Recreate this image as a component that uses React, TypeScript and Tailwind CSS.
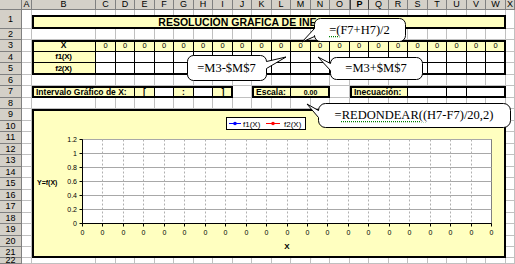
import React from 'react';

const LETTERS = ['A', 'B', 'C', 'D', 'E', 'F', 'G', 'H', 'I', 'J', 'K', 'L', 'M', 'N', 'O', 'P', 'Q', 'R', 'S', 'T', 'U', 'V', 'W', 'X'];
const ROWS = Array.from({ length: 22 }, (_, i) => i + 1);
// grid columns of C..W (row header = 1, A = 2, B = 3)
const DATA_COLS = Array.from({ length: 21 }, (_, i) => i + 4);

const yellow = 'bg-[#ffffc0]';
const hdr = 'bg-[#d4d0c8] border-r border-b border-[#808080] flex items-center justify-center text-[9px] leading-none text-black';

const calloutPath = (x: number, y: number, w: number, h: number, r: number, side: 'left' | 'right', y1: number, y2: number, tx: number, ty: number) => {
  const R = x + w;
  const B = y + h;
  let d = `M${x + r},${y} L${R - r},${y} A${r},${r} 0 0 1 ${R},${y + r} `;
  if (side === 'right') d += `L${R},${y1} L${tx},${ty} L${R},${y2} `;
  d += `L${R},${B - r} A${r},${r} 0 0 1 ${R - r},${B} L${x + r},${B} A${r},${r} 0 0 1 ${x},${B - r} `;
  if (side === 'left') d += `L${x},${y2} L${tx},${ty} L${x},${y1} `;
  d += `L${x},${y + r} A${r},${r} 0 0 1 ${x + r},${y} Z`;
  return d;
};

const Chart: React.FC = () => {
  const xs = Array.from({ length: 21 }, (_, i) => Math.round(82 + i * 20.45) + 0.5);
  const levels: [string, number][] = [['1.2', 139.5], ['1', 153.5], ['0.8', 167.5], ['0.6', 181.5], ['0.4', 195.5], ['0.2', 209.5], ['0', 223.5]];
  const left = xs[0];
  const right = xs[xs.length - 1];

  return (
    <div className={`col-[3/25] row-[10/23] ${yellow} border-2 border-black overflow-hidden`}>
      <svg width={470} height={145} viewBox="34 111 470 145" className="block">
        {/* legend */}
        <rect x={226.5} y={117.5} width={79} height={12} fill="#fff" stroke="#000" />
        <line x1={229} x2={241} y1={123.5} y2={123.5} stroke="#0000ff" />
        <circle cx={235} cy={123.5} r={1.8} fill="#0000ff" />
        <text x={243} y={126.5} fontSize={8}>f1(X)</text>
        <line x1={266} x2={280} y1={123.5} y2={123.5} stroke="#ff0000" />
        <circle cx={273} cy={123.5} r={1.8} fill="#ff0000" />
        <text x={284} y={126.5} fontSize={8}>f2(X)</text>

        {/* plot area */}
        <rect x={left} y={139.5} width={right - left} height={84} fill="#fff" stroke="#808080" />
        {levels.slice(0, -1).map(([, y]) => (
          <line key={y} x1={left} x2={right} y1={y} y2={y} stroke="#a8a8a8" />
        ))}
        {xs.slice(1, -1).map(x => (
          <line key={x} x1={x} x2={x} y1={139.5} y2={223.5} stroke="#b0b0b0" strokeDasharray="2 2" />
        ))}

        {/* axes */}
        <line x1={left} x2={left} y1={139.5} y2={223.5} stroke="#000" />
        <line x1={left} x2={right} y1={223.5} y2={223.5} stroke="#000" />
        {levels.map(([label, y]) => (
          <g key={label}>
            <line x1={left - 3} x2={left} y1={y} y2={y} stroke="#000" />
            <text x={77} y={y + 2.5} fontSize={7} textAnchor="end">{label}</text>
          </g>
        ))}
        {xs.map(x => (
          <g key={x}>
            <line x1={x} x2={x} y1={223.5} y2={226.5} stroke="#000" />
            <text x={x} y={235} fontSize={7} textAnchor="middle">0</text>
          </g>
        ))}
        <text x={287} y={249} fontSize={8} fontWeight="bold" textAnchor="middle">X</text>
        <text x={37} y={184.5} fontSize={7} fontWeight="bold">Y=f(X)</text>
      </svg>
    </div>
  );
};

export default function App() {
  return (
    <div className="relative w-[515px] h-[264px] overflow-hidden bg-white font-['Liberation_Sans',Arial,sans-serif] text-black grid grid-cols-[22px_10px_64px_20px_19px_20px_19px_20px_19px_20px_19px_20px_19px_20px_19px_20px_19px_20px_19px_20px_19px_20px_19px_20px_9px] grid-rows-[10px_19px_11px_12px_11px_12px_11px_12px_11px_12px_11px_12px_11px_12px_11px_12px_11px_12px_11px_12px_11px_11px_6px]">
      {/* gridlines */}
      {ROWS.map(r =>
        LETTERS.map((l, c) => (
          <div key={`${l}${r}`} style={{ gridRow: r + 1, gridColumn: c + 2 }} className="bg-white border-r border-b border-[#c0c0c0]" />
        ))
      )}

      {/* column headers */}
      <div className={`${hdr} col-[1] row-[1]`} />
      {LETTERS.map((l, c) => (
        <div
          key={l}
          style={{ gridRow: 1, gridColumn: c + 2 }}
          className={l === 'P' ? `${hdr} font-bold border-l border-l-[#404040] border-r-[#404040]` : hdr}
        >
          {l}
        </div>
      ))}

      {/* row headers */}
      {ROWS.map(r => (
        <div key={r} style={{ gridRow: r + 1, gridColumn: 1 }} className={`${hdr} text-[9.5px]`}>{r}</div>
      ))}

      {/* title (its tail end sits under the first callout) */}
      <div className={`col-[3/25] row-[2] mt-[5px] ${yellow} border-2 border-black flex items-center justify-center font-bold text-[10.5px] leading-none`}>
        <span>RESOLUCIÓN GRÁFICA DE INE</span>
        <span className="invisible">CUACIONES</span>
      </div>

      {/* rows 3-5 */}
      <div className={`col-[3] row-[4] ${yellow} border-r border-b border-black flex items-center justify-center font-bold text-[8.5px] leading-none`}>X</div>
      <div className={`col-[3] row-[5] ${yellow} border-r border-b border-black flex items-center justify-center font-bold text-[8px] leading-none tracking-[-0.3px]`}>f1(X)</div>
      <div className={`col-[3] row-[6] ${yellow} border-r border-black flex items-center justify-center font-bold text-[8px] leading-none tracking-[-0.3px]`}>f2(X)</div>
      {DATA_COLS.map(c => (
        <div key={`x${c}`} style={{ gridRow: 4, gridColumn: c }} className={`${yellow} border-r border-b border-black flex items-center justify-center text-[7.5px] leading-none`}>0</div>
      ))}
      {DATA_COLS.map(c => (
        <div key={`f1${c}`} style={{ gridRow: 5, gridColumn: c }} className="bg-white border-r border-b border-black" />
      ))}
      {DATA_COLS.map(c => (
        <div key={`f2${c}`} style={{ gridRow: 6, gridColumn: c }} className="bg-white border-r border-black" />
      ))}
      <div className="col-[3/25] row-[4/7] border-2 border-black" />

      {/* row 7 */}
      <div className={`col-[3/6] row-[8] ${yellow} border-r border-black flex items-center pl-[4px] font-bold text-[8.5px] leading-none`}>Intervalo Gráfico de X:</div>
      <div className={`col-[6] row-[8] ${yellow} border-r border-black flex items-center justify-center font-bold text-[8.5px] leading-none`}>[</div>
      <div className="col-[7] row-[8] bg-white border-r border-black" />
      <div className={`col-[8] row-[8] ${yellow} border-r border-black flex items-center justify-center font-bold text-[8.5px] leading-none`}>:</div>
      <div className="col-[9] row-[8] bg-white border-r border-black" />
      <div className={`col-[10] row-[8] ${yellow} flex items-center justify-center font-bold text-[8.5px] leading-none`}>]</div>
      <div className="col-[3/11] row-[8] border-2 border-black" />

      <div className={`col-[12/14] row-[8] ${yellow} border-r border-black flex items-center pl-[4px] font-bold text-[8.5px] leading-none`}>Escala:</div>
      <div className={`col-[14/16] row-[8] ${yellow} flex items-center justify-center font-bold text-[7px] leading-none`}>0.00</div>
      <div className="col-[12/16] row-[8] border-2 border-black" />

      <div className={`col-[17/20] row-[8] ${yellow} border-r border-black flex items-center pl-[4px] font-bold text-[8.5px] leading-none`}>Inecuación:</div>
      <div className="col-[20/22] row-[8] bg-white border-r border-black" />
      <div className="col-[22] row-[8] bg-white border-r border-black" />
      <div className="col-[23/25] row-[8] bg-white" />
      <div className="col-[17/25] row-[8] border-2 border-black" />

      <Chart />

      {/* callouts */}
      <svg width={515} height={264} className="absolute inset-0 pointer-events-none">
        <path d={calloutPath(314.5, 18.5, 91, 23, 6, 'left', 28.5, 36.5, 302, 42)} fill="#fff" stroke="#000" />
        <path d={calloutPath(187.5, 55.5, 79, 25, 6, 'right', 61.5, 68.5, 286, 57)} fill="#fff" stroke="#000" />
        <path d={calloutPath(330.5, 57.5, 92, 22, 6, 'left', 63.5, 70.5, 318, 57)} fill="#fff" stroke="#000" />
        <path d={calloutPath(318.5, 103.5, 192, 24, 7, 'left', 110.5, 117.5, 307, 104)} fill="#fff" stroke="#000" />
      </svg>
      <div className="absolute left-[314px] top-[18px] w-[91px] h-[24px] flex items-center justify-center font-['Liberation_Serif','Times_New_Roman',serif] text-[12.5px] leading-none">
        <span className="underline decoration-dotted decoration-[#008000] underline-offset-2">=(</span>F7+H7)/2
      </div>
      <div className="absolute left-[187px] top-[55px] w-[79px] h-[26px] flex items-center justify-center font-['Liberation_Serif','Times_New_Roman',serif] text-[12.5px] leading-none">
        =M3-$M$7
      </div>
      <div className="absolute left-[330px] top-[57px] w-[92px] h-[23px] flex items-center justify-center font-['Liberation_Serif','Times_New_Roman',serif] text-[12.5px] leading-none">
        =M3+$M$7
      </div>
      <div className="absolute left-[318px] top-[103px] w-[192px] h-[25px] flex items-center justify-center font-['Liberation_Serif','Times_New_Roman',serif] text-[12.5px] leading-none">
        =<span className="underline decoration-dotted decoration-[#008000] underline-offset-2">REDONDEAR((</span>H7-F7)/20,2)
      </div>
    </div>
  );
}
